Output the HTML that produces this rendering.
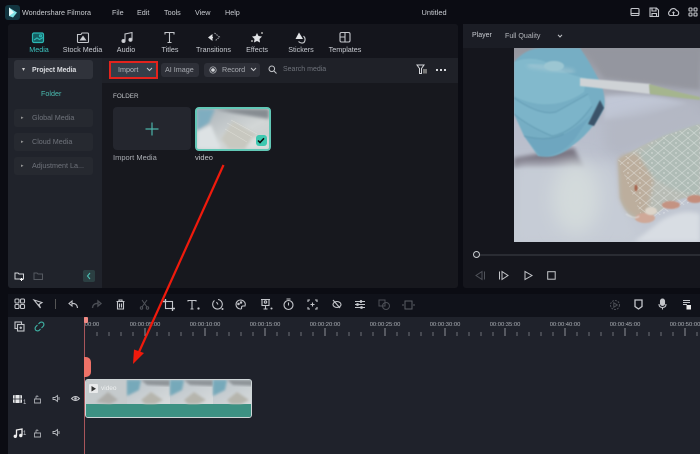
<!DOCTYPE html>
<html><head><meta charset="utf-8">
<style>
html{margin:0;padding:0;background:#0b0c13;width:700px;height:454px;overflow:hidden}
body{margin:0;padding:0;background:#0b0c13;width:700px;height:454px;overflow:hidden;position:relative;font-family:"Liberation Sans",sans-serif;color:#c9ccd2;filter:blur(.3px)}
.a{position:absolute}
.t{position:absolute;white-space:nowrap;font-size:7.200px;line-height:10px}
svg{position:absolute;overflow:visible}
.i{fill:none;stroke:#c4c6cb;stroke-width:1.100}
.c{transform:translateX(-50%)}
.side{position:absolute;left:14px;width:79px;height:18px;background:#262930;border-radius:3px}
.tc{position:absolute;top:321px;font-size:5.800px;line-height:8px;color:#aeb2b8;white-space:nowrap;transform:translateX(-50%)}
</style></head><body>

<!-- title bar -->
<svg style="left:5px;top:5px" width="16" height="16"><rect width="15" height="15" rx="3" fill="#123540"/><path d="M4 2.500L12 7.500L8 12.500L4 11Z" fill="#7fe3e6"/><path d="M4 2.500L9 7.500L4 11Z" fill="#e8fbfb"/></svg>
<div class="t" style="left:22px;top:8px;color:#c9ccd0">Wondershare Filmora</div>
<div class="t" style="left:112px;top:8px">File</div>
<div class="t" style="left:137px;top:8px">Edit</div>
<div class="t" style="left:164px;top:8px">Tools</div>
<div class="t" style="left:195px;top:8px">View</div>
<div class="t" style="left:225px;top:8px">Help</div>
<div class="t" style="left:421.500px;top:8px;font-size:7.400px">Untitled</div>
<svg class="i" style="left:630px;top:7px" width="12" height="11"><rect x="1" y="1.500" width="8" height="7" rx="1"/><path d="M1 6.500H9"/></svg>
<svg class="i" style="left:649px;top:7px" width="12" height="11"><path d="M1 1H7.500L9.500 3V9.500H1ZM3 1V4H7V1M3 9.500V6.500H7.500V9.500"/></svg>
<svg class="i" style="left:667px;top:7px" width="14" height="11"><path d="M3 8.500A2.500 2.500 0 0 1 3 4A3.500 3.500 0 0 1 9.500 3.500A2.600 2.600 0 0 1 10 8.500ZM6.500 8V5M5.500 6L6.500 5L7.500 6"/></svg>
<svg class="i" style="left:688px;top:7px" width="12" height="11"><rect x="1" y="1" width="3" height="3" rx=".7"/><rect x="6" y="1" width="3" height="3" rx=".7"/><rect x="1" y="6" width="3" height="3" rx=".7"/><rect x="6" y="6" width="3" height="3" rx=".7"/></svg>

<!-- media panel -->
<div class="a" style="left:8px;top:24px;width:450px;height:264px;background:#17181e;border-radius:3px"></div>
<div class="a" style="left:8px;top:24px;width:450px;height:34px;background:#14151c;border-radius:3px 3px 0 0"></div>
<div class="a" style="left:8px;top:58px;width:94px;height:230px;background:#20232b;border-radius:0 0 0 3px"></div>
<div class="a" style="left:102px;top:58px;width:356px;height:25px;background:#1f2128"></div>

<!-- top tabs -->
<svg style="left:31px;top:31px" width="15" height="13" fill="none" stroke="#2bb7b4" stroke-width="1.200"><rect x="1.500" y="2" width="11" height="9.500" rx="1.500" fill="#155f63"/><path d="M3 9L6 7L8.500 8.500L12 6.500"/><circle cx="9.500" cy="4.800" r="1"/></svg>
<div class="t c" style="left:39px;top:45px;color:#3cc4bf">Media</div>
<svg class="i" style="left:76px;top:31px" width="14" height="13"><path d="M1.500 3.500H5L6 2H11.500Q12.500 2 12.500 3V10.500Q12.500 11.500 11.500 11.500H2.500Q1.500 11.500 1.500 10.500Z"/><path d="M4.500 9L7 5.500L9.500 9Z" fill="#d5d7db"/></svg>
<div class="t c" style="left:82.500px;top:45px">Stock Media</div>
<svg class="i" style="left:120px;top:31px" width="14" height="13" stroke-width="1.400"><path d="M5 10V3L12 1.500V8.500"/><circle cx="3.500" cy="10" r="1.500" fill="#d5d7db"/><circle cx="10.500" cy="8.800" r="1.500" fill="#d5d7db"/></svg>
<div class="t c" style="left:126px;top:45px">Audio</div>
<svg class="i" style="left:164px;top:31px" width="12" height="13" stroke-width="1.300"><path d="M1 3.500V1.500H10V3.500M5.500 1.500V11M3.500 11.500H7.500"/></svg>
<div class="t c" style="left:170px;top:45px">Titles</div>
<svg style="left:207px;top:31px" width="14" height="13"><path d="M1 6.500L5.500 3V10Z" fill="#e0e2e5"/><path d="M6 6.500H3" stroke="#e0e2e5"/><path d="M7.500 2L12.500 6L8 10" fill="none" stroke="#a5a8ae" stroke-dasharray="1.500 1"/></svg>
<div class="t c" style="left:213.500px;top:45px">Transitions</div>
<svg style="left:250px;top:31px" width="14" height="13"><path d="M7 2L8.500 5L12 5.500L9.500 8L10 11.500L7 10L4 11.500L4.500 8L2 5.500L5.500 5Z" fill="#e0e2e5"/><circle cx="12" cy="2" r="1" fill="#aaa"/><circle cx="2" cy="10" r="1" fill="#aaa"/></svg>
<div class="t c" style="left:257px;top:45px">Effects</div>
<svg style="left:294px;top:31px" width="14" height="14"><path d="M5 1.500L9 8H1.500Z" fill="#e0e2e5"/><path d="M9.500 5Q12.500 8 10 11.500Q7 13 4.500 10.500" fill="none" stroke="#c5c7cb" stroke-width="1.100"/></svg>
<div class="t c" style="left:301px;top:45px">Stickers</div>
<svg class="i" style="left:339px;top:31px" width="13" height="13"><rect x="1" y="1.500" width="10" height="9.500" rx="1.500"/><path d="M6 1.500V11M1 6H6"/></svg>
<div class="t c" style="left:345px;top:45px">Templates</div>

<!-- sidebar -->
<div class="side" style="top:60px;height:19px;background:#30333b"></div>
<div class="t" style="left:22px;top:65px;font-size:6px;color:#ccc">▾</div>
<div class="t" style="left:32px;top:66px;color:#d8dade;font-size:7px;font-weight:bold;letter-spacing:-.1px">Project Media</div>
<div class="t" style="left:41px;top:89px;color:#4bbdb2">Folder</div>
<div class="side" style="top:109px"></div>
<div class="t" style="left:21px;top:113px;font-size:5px;color:#999">▸</div>
<div class="t" style="left:32px;top:113px;color:#6f737b">Global Media</div>
<div class="side" style="top:133px"></div>
<div class="t" style="left:21px;top:137px;font-size:5px;color:#999">▸</div>
<div class="t" style="left:32px;top:137px;color:#6f737b">Cloud Media</div>
<div class="side" style="top:157px"></div>
<div class="t" style="left:21px;top:161px;font-size:5px;color:#999">▸</div>
<div class="t" style="left:32px;top:161px;color:#6f737b">Adjustment La...</div>
<svg style="left:14px;top:271px" width="11" height="10" fill="none" stroke="#d5d7db"><path d="M1 2H4L5 3H9.500V8H1Z"/><path d="M7.500 7V10M6 8.500H9" stroke="#fff"/></svg>
<svg style="left:33px;top:271px" width="11" height="10" fill="none" stroke="#555960"><path d="M1 2H4L5 3H9.500V8.500H1Z"/></svg>
<div class="a" style="left:83px;top:270px;width:12px;height:12px;background:#2b3f42;border-radius:2px"></div>
<svg style="left:86px;top:272px" width="6" height="8" fill="none" stroke="#4bbdb2" stroke-width="1.100"><path d="M4 1L1.500 4L4 7"/></svg>

<!-- media toolbar -->
<div class="a" style="left:111px;top:63px;width:45px;height:14px;background:#343e49"></div>
<div class="a" style="left:109px;top:61px;width:44.500px;height:13.500px;border:2px solid #e3231d;box-sizing:content-box"></div>
<div class="t" style="left:118px;top:65px;color:#b4b7bc">Import</div>
<svg style="left:146px;top:67px" width="7" height="5" fill="none" stroke="#c5c7cb"><path d="M1 1L3.500 3.500L6 1"/></svg>
<div class="a" style="left:161px;top:63px;width:38px;height:14px;background:#2e3038;border-radius:3px"></div>
<div class="t" style="left:165px;top:65px;color:#a8abb1">AI Image</div>
<div class="a" style="left:204px;top:63px;width:56px;height:14px;background:#2e3038;border-radius:3px"></div>
<svg style="left:209px;top:66px" width="8" height="8"><circle cx="4" cy="4" r="3.200" fill="none" stroke="#bfc1c6" stroke-width=".7"/><circle cx="4" cy="4" r="1.800" fill="#d5d7db"/></svg>
<div class="t" style="left:222px;top:65px;color:#a8abb1">Record</div>
<svg style="left:250px;top:67px" width="7" height="5" fill="none" stroke="#c5c7cb"><path d="M1 1L3.500 3.500L6 1"/></svg>
<svg style="left:268px;top:65px" width="9" height="9" fill="none" stroke="#c5c7cb"><circle cx="3.800" cy="3.800" r="2.800"/><path d="M6 6L8.500 8.500"/></svg>
<div class="t" style="left:283px;top:65px;color:#6f737b;font-size:7px">Search media</div>
<svg style="left:416px;top:64px" width="13" height="12"><path d="M1 1H8L5.500 4.500V9.500H3.500V4.500Z" fill="none" stroke="#d5d7db"/><rect x="7" y="5" width="4" height="4.500" fill="#777"/></svg>
<div class="a" style="left:436px;top:69px;width:2px;height:2px;background:#d5d7db;box-shadow:4px 0 #d5d7db,8px 0 #d5d7db"></div>

<div class="t" style="left:113px;top:92px;font-size:6.300px;color:#c3c6ca">FOLDER</div>

<!-- import tile -->
<div class="a" style="left:113px;top:107px;width:78px;height:43px;background:#24262e;border-radius:4px"></div>
<svg style="left:145px;top:122px" width="14" height="14" stroke="#4bb3a9" stroke-width="1.200"><path d="M7 .5V13.500M.5 7H13.500"/></svg>
<div class="t" style="left:113px;top:153px;color:#a9acb2;font-size:7.500px">Import Media</div>

<!-- video tile -->
<div class="a" style="left:195px;top:107px;width:76px;height:44px;box-sizing:border-box;border:2px solid #62c7b6;border-radius:4px;overflow:hidden;background:#c6cccd">
<svg style="left:0;top:0" width="72" height="40">
<defs><filter id="b0"><feGaussianBlur stdDeviation="1.500"/></filter>
<linearGradient id="g0" x1="0" y1="0" x2="1" y2="1"><stop offset="0" stop-color="#a8b0b6"/><stop offset=".6" stop-color="#d2d6d6"/><stop offset="1" stop-color="#c9cdcc"/></linearGradient></defs>
<rect width="72" height="40" fill="url(#g0)"/>
<g filter="url(#b0)">
<path d="M0 0H18L12 14L0 22Z" fill="#7fadc0"/>
<path d="M18 0H72V10L36 4Z" fill="#868c92"/>
<path d="M0 22L14 16L24 40H0Z" fill="#dde2e4"/>
<path d="M24 30L36 12L60 26L48 40H32Z" fill="#c8c8c0"/>
<path d="M56 28H72V40H48Z" fill="#dcdfde"/>
</g>
<path d="M30 14L55 28M34 11L60 25M28 20L50 33" stroke="#efefe9" stroke-width=".5" opacity=".6"/>
</svg>
<div class="a" style="right:2px;bottom:3px;width:11px;height:11px;background:#3ec8b0;border-radius:3px"></div>
<svg style="right:4px;bottom:5px" width="8" height="7" fill="none" stroke="#0a0a0a" stroke-width="1.500"><path d="M1 3.500L3 5.500L7 1.300"/></svg>
</div>
<div class="t" style="left:195px;top:153px;color:#c0c3c8;font-size:7.500px">video</div>

<!-- player panel -->
<div class="a" style="left:463px;top:24px;width:237px;height:264px;background:#15161d;border-radius:3px 0 0 3px"></div>
<div class="a" style="left:463px;top:24px;width:237px;height:24px;background:#1b1d25"></div>
<div class="t" style="left:472px;top:31px;font-size:7px">Player</div>
<div class="t" style="left:505px;top:31px;font-size:7.100px;color:#b4b7bc">Full Quality</div>
<svg style="left:557px;top:34px" width="6" height="4" fill="none" stroke="#c5c7cb"><path d="M1 .8L3 3L5 .8"/></svg>

<!-- player video -->
<svg style="left:514px;top:48px" width="186" height="194" viewBox="0 0 186 194">
<defs>
<filter id="b1" x="-20%" y="-20%" width="140%" height="140%"><feGaussianBlur stdDeviation="6"/></filter>
<filter id="b2" x="-10%" y="-10%" width="120%" height="120%"><feGaussianBlur stdDeviation="2"/></filter>
<filter id="b3" x="-30%" y="-30%" width="160%" height="160%"><feGaussianBlur stdDeviation="9"/></filter>
<filter id="b4" x="-5%" y="-5%" width="110%" height="110%"><feGaussianBlur stdDeviation=".8"/></filter>
<clipPath id="cv"><rect width="186" height="194"/></clipPath>
<linearGradient id="bg" x1="0" y1="0" x2="0" y2="1"><stop offset="0" stop-color="#95979f"/><stop offset=".25" stop-color="#a7aab6"/><stop offset=".4" stop-color="#b8bdcb"/><stop offset="1" stop-color="#c4cad4"/></linearGradient>
<pattern id="cells" width="12" height="10" patternUnits="userSpaceOnUse"><path d="M0 5L6 0L12 5L6 10Z" fill="none" stroke="#eef0ee" stroke-width=".7" opacity=".5"/><circle cx="6" cy="5" r=".7" fill="#fff" opacity=".6"/></pattern>
</defs>
<g clip-path="url(#cv)">
<rect width="186" height="194" fill="url(#bg)"/>
<path d="M70 0H186V42L120 34L90 30Z" fill="#94969f" filter="url(#b2)"/>
<path d="M90 48Q140 44 175 56L130 70L90 72Z" fill="#c1c7d6" filter="url(#b2)"/>
<path d="M90 72L186 50V78L104 110L90 100Z" fill="#b4b8c4" filter="url(#b1)"/>
<path d="M0 110L60 100L70 120H0Z" fill="#6f6a78" filter="url(#b2)"/>
<path d="M0 115H100L126 194H0Z" fill="#c6ccd6" filter="url(#b1)"/>
<ellipse cx="62" cy="150" rx="24" ry="36" fill="#d3dadb" filter="url(#b3)"/>
<path d="M148 172Q170 160 186 166V194H120Z" fill="#d8dde3" filter="url(#b2)"/>
<!-- glove -->
<g filter="url(#b4)">
<path d="M0 14Q12 0 28 0L66 0Q76 14 88 38Q92 52 90 60Q78 84 58 98Q42 112 24 108L10 88L0 66Z" fill="#76aec4"/>
<path d="M0 14Q20 6 40 18Q56 28 72 30L70 44Q50 58 26 56Q10 54 0 48Z" fill="#82b9cc"/>
<path d="M0 50Q26 68 42 64Q60 54 74 46L78 58Q60 84 38 88Q14 78 0 66Z" fill="#7bb4c9"/>
<path d="M10 88Q34 94 50 86Q66 78 78 66L60 92Q44 110 26 108Z" fill="#6ea6bf"/>
<path d="M0 50Q26 68 42 64Q60 54 74 46M0 66Q14 78 38 88Q60 84 78 58M10 88Q34 94 50 86" stroke="#5d94ad" stroke-width="1" fill="none" opacity=".7"/>
<path d="M14 17L60 24" stroke="#b2cfd8" stroke-width="4" opacity=".6" filter="url(#b2)"/>
<ellipse cx="40" cy="18" rx="10" ry="5" fill="#9cc6d2"/>
</g>
<path d="M86 52L90 60L80 78L74 76Z" fill="#3a5369" filter="url(#b4)"/>
<!-- pipette -->
<path d="M66 30L136 36L136 46L66 38Z" fill="#cfd3d6" filter="url(#b4)"/>
<path d="M135 36L168 45L186 49V52L168 50L136 46Z" fill="#a5b58e" filter="url(#b4)"/>
<!-- plate -->
<path d="M104 112Q120 100 150 88L186 76V150Q170 146 150 160L130 174Q112 170 106 150Z" fill="#b8bcb5" filter="url(#b4)"/>
<path d="M104 112Q108 104 125 106L140 130L132 172Q112 170 106 150Z" fill="#bcae9d" filter="url(#b2)"/>
<path d="M125 106L150 88L186 76V148Q160 145 140 130Z" fill="#afbcb6" filter="url(#b2)"/>
<path d="M104 112L150 88L186 76V150L130 174Z" fill="url(#cells)"/>
<g filter="url(#b4)">
<ellipse cx="131" cy="170" rx="10" ry="5" fill="#cfa898"/><ellipse cx="157" cy="157" rx="9" ry="4" fill="#c49382"/><ellipse cx="181" cy="151" rx="8" ry="4" fill="#c48d7c"/>
<ellipse cx="137" cy="163" rx="6" ry="4" fill="#ddd5ca"/><ellipse cx="122" cy="140" rx="1.500" ry="3.500" fill="#a5624c"/>
<path d="M112 166Q122 172 125 168" stroke="#dfe2e1" fill="none"/>
</g>
</g>
</svg>

<!-- player controls -->
<div class="a" style="left:476px;top:254px;width:224px;height:2px;background:#2a2c33"></div>
<div class="a" style="left:472.500px;top:250.500px;width:7px;height:7px;border-radius:50%;background:#20222a;border:1.500px solid #c9ccd0;box-sizing:border-box"></div>
<svg style="left:474px;top:270px" width="12" height="11" fill="none" stroke="#50535a"><path d="M8 1.500V9.500L2 5.500ZM10.500 1.500V9.500"/></svg>
<svg style="left:498px;top:270px" width="12" height="11" fill="none" stroke="#c5c7cb"><path d="M1.500 1.500V9.500M4 1.500V9.500L10 5.500L4 1.500Z"/></svg>
<svg style="left:522px;top:270px" width="12" height="11" fill="none" stroke="#c5c7cb"><path d="M3 1.500V9.500L10 5.500Z"/></svg>
<svg style="left:547px;top:271px" width="9" height="9" fill="none" stroke="#c5c7cb"><rect x=".7" y=".7" width="7.500" height="7.500"/></svg>

<!-- timeline toolbar -->
<div class="a" style="left:8px;top:294px;width:692px;height:23px;background:#10121a"></div>
<svg class="i" style="left:14px;top:298px" width="12" height="12"><rect x="1" y="1" width="4" height="4" rx="1"/><rect x="6.500" y="1" width="4" height="4" rx="1"/><rect x="1" y="6.500" width="4" height="4" rx="1"/><rect x="6.500" y="6.500" width="4" height="4" rx="1"/></svg>
<svg class="i" style="left:33px;top:299px" width="12" height="11"><path d="M1 1L9 3.500L6 5.500L7.500 9L1 1Z"/></svg>
<div class="a" style="left:55px;top:299px;width:1px;height:10px;background:#555"></div>
<svg class="i" style="left:68px;top:300px" width="11" height="9" stroke-width="1.400"><path d="M1 3.500L4 1V6ZM4 3.500Q9 3 9.500 8"/></svg>
<svg style="left:91px;top:300px" width="11" height="9" fill="none" stroke="#4a4d54" stroke-width="1.400"><path d="M10 3.500L7 1V6ZM7 3.500Q2 3 1.500 8"/></svg>
<svg class="i" style="left:115px;top:299px" width="11" height="11"><path d="M1.500 2.500H9.500M4 2.500V1H7V2.500M2.500 2.500V10H8.500V2.500M4.500 4.500V8.500M6.500 4.500V8.500"/></svg>
<svg style="left:139px;top:299px" width="11" height="11" fill="none" stroke="#50535a"><path d="M3 1L8 8M8 1L3 8"/><circle cx="2.500" cy="9" r="1.200"/><circle cx="8.500" cy="9" r="1.200"/></svg>
<svg class="i" style="left:163px;top:299px" width="12" height="12"><rect x="2.500" y="2.500" width="7" height="7"/><path d="M0 2.500H2.500V0M9.500 12V9.500H12" stroke-width="1.400"/></svg>
<svg class="i" style="left:187px;top:299px" width="14" height="12" stroke-width="1.200"><path d="M1 2.500V1.500H9V2.500M5 1.500V10M3.500 10H6.500"/><circle cx="11.500" cy="9.500" r=".6"/></svg>
<svg class="i" style="left:211px;top:298px" width="13" height="13"><path d="M3.500 2.500A4.800 4.800 0 1 0 7 1.500M5.500 4L7 6.500"/><circle cx="11.500" cy="11" r=".5"/></svg>
<svg class="i" style="left:235px;top:299px" width="12" height="12"><path d="M5.500 1A4.500 4.500 0 0 0 5.500 10Q7 10 6.500 8.500Q6.500 7 8 7H10Q11 4 8.500 2Q7 1 5.500 1Z"/><circle cx="3.500" cy="5" r=".7" fill="#d5d7db"/><circle cx="6" cy="3.500" r=".7" fill="#d5d7db"/></svg>
<svg class="i" style="left:260px;top:298px" width="13" height="13"><path d="M1 1.500H10M2 1.500V7.500H9V1.500M5.500 7.500V11M3.500 11H7.500"/><circle cx="5.500" cy="4" r="1.200"/><circle cx="11.500" cy="10.500" r=".5"/></svg>
<svg class="i" style="left:283px;top:298px" width="12" height="13" stroke-width="1.200"><circle cx="5.500" cy="7" r="4.500"/><path d="M3.500 1H7.500M5.500 4.500V7.500"/></svg>
<svg class="i" style="left:307px;top:299px" width="12" height="11"><path d="M1 3V1H3M8 1H10V3M10 8V10H8M3 10H1V8M3.500 5.500H7.500M5.500 3.500V7.500"/></svg>
<svg class="i" style="left:331px;top:299px" width="12" height="11"><path d="M2 1L9 9"/><ellipse cx="6" cy="5.500" rx="4" ry="3"/></svg>
<svg class="i" style="left:355px;top:300px" width="11" height="9" stroke-width="1.300"><path d="M0 1.500H10M0 4.500H10M0 7.500H10"/><rect x="5.500" y=".7" width="1" height="1.600" fill="#d5d7db"/><rect x="2" y="3.700" width="1" height="1.600" fill="#d5d7db"/><rect x="6" y="6.700" width="1" height="1.600" fill="#d5d7db"/></svg>
<svg style="left:378px;top:299px" width="14" height="12" fill="none" stroke="#4c4f56"><rect x="1" y="1" width="6" height="6"/><circle cx="8" cy="7" r="3.500"/></svg>
<svg style="left:401px;top:300px" width="15" height="10" fill="none" stroke="#5a5d64"><rect x="4" y="1" width="7" height="8"/><path d="M1 5H3M12 5H14"/></svg>
<svg style="left:609px;top:299px" width="12" height="12" fill="none" stroke="#4c4f56"><circle cx="6" cy="6" r="4.500" stroke-dasharray="2 1"/><path d="M4.800 3.800V8.200L8.300 6Z"/></svg>
<svg class="i" style="left:634px;top:299px" width="9" height="11"><path d="M1 1H8V7.500L4.500 10L1 7.500Z" stroke-width="1.300"/></svg>
<svg class="i" style="left:658px;top:298px" width="9" height="12"><rect x="2.500" y="1" width="4" height="6.500" rx="2" fill="#c5c7cb"/><path d="M1 6Q1 9.500 4.500 9.500Q8 9.500 8 6M4.500 9.500V11.500"/></svg>
<svg style="left:682px;top:299px" width="10" height="11" stroke="#c5c7cb"><path d="M1 1.500H8M1 3.500H8M1 5.500H5" fill="none"/><rect x="4.500" y="6" width="4.500" height="4.500" fill="#e8e8e8" stroke="none"/></svg>

<!-- timeline body -->
<div class="a" style="left:8px;top:317px;width:692px;height:137px;background:#1f222b"></div>
<svg class="i" style="left:14px;top:321px" width="11" height="11" stroke="#bdc0c5"><rect x="1" y="1" width="6.500" height="6.500"/><rect x="3.500" y="3.500" width="6.500" height="6.500" fill="#1f222b"/><path d="M5.500 6.800H8M6.800 5.500V8"/></svg>
<svg style="left:34px;top:321px" width="11" height="11" fill="none" stroke="#3fb3a5" stroke-width="1.100"><path d="M4.500 3L6 1.500Q8 .5 9.500 2Q10.500 4 9 5.500L7.500 7M6.500 8L5 9.500Q3 10.500 1.500 9Q.5 7 2 5.500L3.500 4"/></svg>

<div class="tc" style="left:92px;">00:00</div>
<div class="tc" style="left:145px;">00:00:05:00</div>
<div class="tc" style="left:205px;">00:00:10:00</div>
<div class="tc" style="left:265px;">00:00:15:00</div>
<div class="tc" style="left:325px;">00:00:20:00</div>
<div class="tc" style="left:385px;">00:00:25:00</div>
<div class="tc" style="left:445px;">00:00:30:00</div>
<div class="tc" style="left:505px;">00:00:35:00</div>
<div class="tc" style="left:565px;">00:00:40:00</div>
<div class="tc" style="left:625px;">00:00:45:00</div>
<div class="tc" style="left:685px;">00:00:50:00</div>
<svg style="left:84px;top:327px" width="616" height="10">
<defs><pattern id="tk" x="12.500" width="12" height="10" patternUnits="userSpaceOnUse"><rect x="0" y="5" width="1" height="4" fill="#6d7077"/></pattern>
<pattern id="tk2" x="60.500" width="60" height="10" patternUnits="userSpaceOnUse"><rect x="0" y="1" width="1" height="8" fill="#8d9097"/></pattern></defs>
<rect x="10" width="606" height="10" fill="url(#tk)"/>
<rect x="10" width="606" height="10" fill="url(#tk2)"/>
</svg>

<!-- playhead -->
<div class="a" style="left:84px;top:317px;width:1px;height:137px;background:#a8565b"></div>
<div class="a" style="left:84px;top:317px;width:4px;height:6px;background:#f08a84;border-radius:1px"></div>
<div class="a" style="left:84px;top:357px;width:7px;height:20px;background:#ee7268;border-radius:0 5px 5px 0"></div>

<!-- track headers -->
<svg style="left:13px;top:394px" width="11" height="10"><rect width="9" height="8" y="1" rx="1" fill="#e8e9eb"/><path d="M2 1V9M7 1V9M0 5H9" stroke="#1f222b" stroke-width=".8"/></svg>
<div class="t" style="left:23px;top:398px;font-size:6px">1</div>
<svg style="left:33px;top:395px" width="9" height="9" fill="none" stroke="#a9acb2" stroke-width=".9"><path d="M1.500 4H7.500V8H1.500ZM3 4V2Q3 1 4 1Q5 1 5 2"/></svg>
<svg style="left:52px;top:394px" width="10" height="9" fill="none" stroke="#b6b9be" stroke-width=".9"><path d="M1 3.500H3L5.500 1.500V7.500L3 5.500H1ZM7 3V6"/></svg>
<svg style="left:71px;top:395px" width="9" height="7" fill="none" stroke="#c5c7cb" stroke-width=".9"><path d="M.5 3.500Q4.500 -.5 8.500 3.500Q4.500 7.500 .5 3.500Z"/><circle cx="4.500" cy="3.500" r=".8" fill="#c5c7cb"/></svg>
<svg style="left:13px;top:428px" width="11" height="11"><path d="M3.500 8V2L9 1V7" fill="none" stroke="#eee" stroke-width="1.300"/><circle cx="2.300" cy="8.300" r="1.700" fill="#eee"/><circle cx="7.800" cy="7.500" r="1.700" fill="#eee"/></svg>
<div class="t" style="left:23px;top:429px;font-size:6px">1</div>
<svg style="left:33px;top:429px" width="9" height="9" fill="none" stroke="#a9acb2" stroke-width=".9"><path d="M1.500 4H7.500V8H1.500ZM3 4V2Q3 1 4 1Q5 1 5 2"/></svg>
<svg style="left:52px;top:428px" width="10" height="9" fill="none" stroke="#b6b9be" stroke-width=".9"><path d="M1 3.500H3L5.500 1.500V7.500L3 5.500H1ZM7 3V6"/></svg>

<!-- clip -->
<div class="a" style="left:85px;top:379px;width:167px;height:39px;box-sizing:border-box;border:1px solid #cfd6d8;border-radius:3px;overflow:hidden;background:#3d9183">
<svg style="left:0;top:0" width="165" height="24" viewBox="0 0 165 24">
<defs><linearGradient id="cf" x1="0" y1="0" x2="1" y2="1"><stop offset="0" stop-color="#b9c2c8"/><stop offset="1" stop-color="#d8dbdc"/></linearGradient>
<filter id="b5"><feGaussianBlur stdDeviation="1.200"/></filter>
<g id="fr"><rect width="43" height="24" fill="url(#cf)"/><path d="M0 0H14L12 10L0 16Z" fill="#76a9ba" filter="url(#b5)"/><path d="M14 0H43V6L20 5Z" fill="#8f9499" filter="url(#b5)"/><path d="M14 20L24 12L36 20L28 24H18Z" fill="#b6b5ad" filter="url(#b5)"/></g></defs>
<rect width="42" height="24" fill="#c5cacc"/>
<path d="M10 22L22 12L32 20L24 24Z" fill="#aeaeaa" filter="url(#b5)"/>
<use href="#fr" x="41"/><use href="#fr" x="84"/><use href="#fr" x="127"/>
</svg>
<div class="a" style="left:3px;top:4px;width:9px;height:9px;background:#e9eaeb;border-radius:1px"></div>
<svg style="left:5px;top:6px" width="6" height="6"><path d="M.5 0V5.500L5 2.800Z" fill="#333"/></svg>
<div class="t" style="left:15px;top:4px;font-size:6.500px;color:#eef0f0">video</div>
<div class="a" style="left:0;top:25px;width:165px;height:12px;background:#3d9183"></div>
</div>

<!-- red annotation arrow -->
<svg style="left:0;top:0" width="700" height="454">
<path d="M223.500 165L139 352" stroke="#f01a0c" stroke-width="2.200" fill="none"/>
<path d="M144 353L133 364L134 349.500Z" fill="#f01a0c"/>
</svg>

</body></html>
